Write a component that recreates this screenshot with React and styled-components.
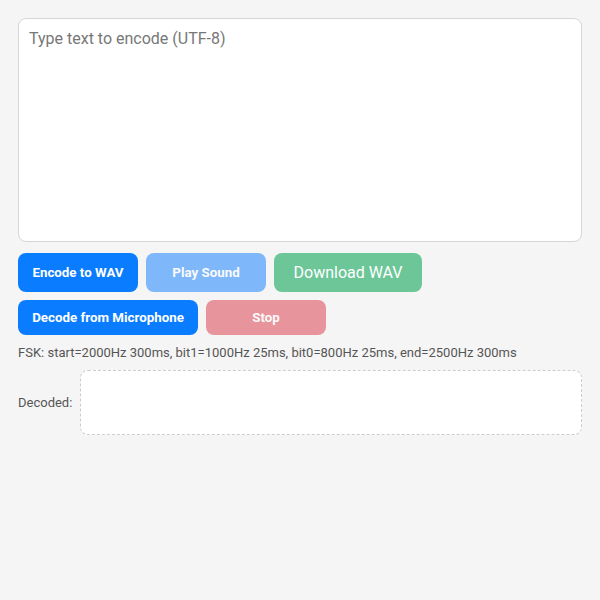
import React from "react";
import styled, { createGlobalStyle } from "styled-components";

const GlobalStyle = createGlobalStyle`
  html, body {
    margin: 0;
    background: #f5f5f5;
    font-family: Roboto, "Liberation Sans", sans-serif;
  }
`;

const Page = styled.main`
  padding: 18px;
  display: flex;
  flex-direction: column;
`;

const TextInput = styled.textarea`
  box-sizing: border-box;
  width: 100%;
  height: 224px;
  padding: 10px;
  border: 1px solid #d6d6d6;
  border-radius: 8px;
  background: #fff;
  font-family: inherit;
  font-size: 16px;
  color: #333;
  resize: none;
  outline: none;

  &::placeholder {
    color: #777;
  }
`;

const Row = styled.div`
  display: flex;
  gap: 8px;
  margin-top: ${(p) => p.$top || 8}px;
`;

const colors = {
  blue: "#0a7cff",
  green: "#6cc698",
  red: "#dc3545",
};

const Button = styled.button`
  box-sizing: border-box;
  width: ${(p) => p.$width || 120}px;
  padding: 10px 0;
  border: none;
  border-radius: 8px;
  background: ${(p) => colors[p.$color]};
  color: #fff;
  font-family: inherit;
  font-size: ${(p) => (p.$plain ? "16px" : "13.33px")};
  font-weight: ${(p) => (p.$plain ? 400 : 700)};
  cursor: pointer;

  &:disabled {
    opacity: 0.5;
    cursor: default;
  }
`;

const Info = styled.div`
  margin-top: 10px;
  font-size: 13px;
  color: #555;
`;

const DecodedRow = styled.div`
  display: flex;
  align-items: center;
  gap: 8px;
  margin-top: 10px;
`;

const Label = styled.span`
  font-size: 13px;
  color: #555;
`;

const Output = styled.div`
  flex: 1;
  height: 65px;
  box-sizing: border-box;
  border: 1px dashed #ccc;
  border-radius: 8px;
  background: #fff;
`;

export default function App() {
  return (
    <>
      <GlobalStyle />
      <Page>
        <TextInput placeholder="Type text to encode (UTF-8)" />
        <Row $top={11}>
          <Button $color="blue">Encode to WAV</Button>
          <Button $color="blue" disabled>
            Play Sound
          </Button>
          <Button $color="green" $plain $width={148}>
            Download WAV
          </Button>
        </Row>
        <Row>
          <Button $color="blue" $width={180}>
            Decode from Microphone
          </Button>
          <Button $color="red" disabled>
            Stop
          </Button>
        </Row>
        <Info>
          FSK: start=2000Hz 300ms, bit1=1000Hz 25ms, bit0=800Hz 25ms,
          end=2500Hz 300ms
        </Info>
        <DecodedRow>
          <Label>Decoded:</Label>
          <Output />
        </DecodedRow>
      </Page>
    </>
  );
}
